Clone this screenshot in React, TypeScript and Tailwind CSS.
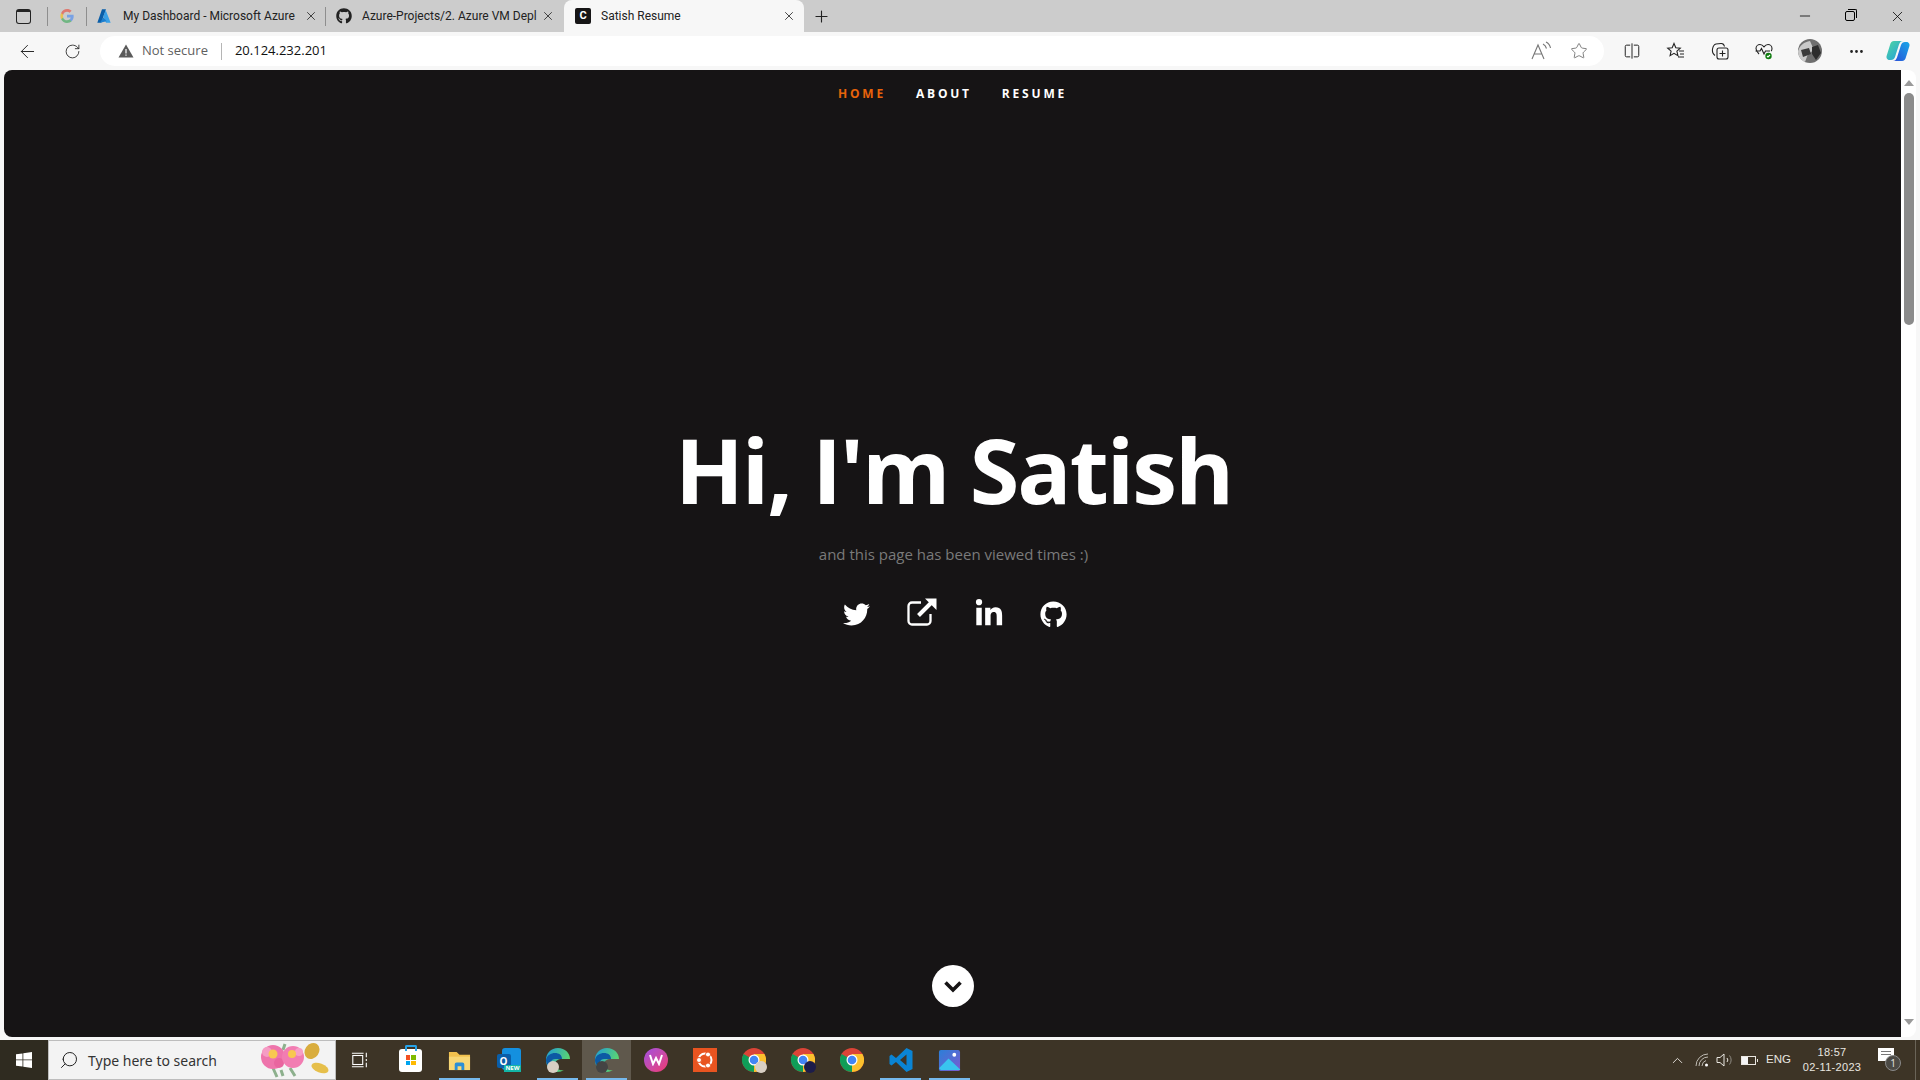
import { FaTwitter, FaLinkedinIn, FaGithub } from 'react-icons/fa'
import { ArrowLeft, RotateCw, X, Plus, Minus, Star, ChevronUp, Search, MoreHorizontal } from 'lucide-react'

function GoogleIcon() {
  return (
    <svg viewBox="0 0 24 24" className="w-4 h-4 opacity-60">
      <path d="M22 12.2c0-.7-.1-1.4-.2-2H12v3.900h5.600c-.3 1.300-1 2.400-2.100 3.100v2.600h3.400c2-1.800 3.100-4.500 3.100-7.600z" fill="#4285f4" />
      <path d="M12 22.500c2.800 0 5.200-.9 6.900-2.500l-3.400-2.600c-.9.600-2.100 1-3.500 1-2.700 0-5-1.800-5.800-4.300H3.200v2.700c1.700 3.400 5.100 5.700 8.800 5.700z" fill="#34a853" />
      <path d="M6.200 14.100c-.4-1.300-.4-2.700 0-4V7.400H3.200c-1.500 2.800-1.500 6.200 0 9.400z" fill="#fbbc05" />
      <path d="M12 5.600c1.500 0 2.900.5 3.900 1.500l3-3C17.200 2.500 14.800 1.500 12 1.500c-3.700 0-7.100 2.300-8.800 5.900l3 2.700C7 7.500 9.300 5.600 12 5.600z" fill="#ea4335" />
    </svg>
  )
}

function AzureIcon() {
  return (
    <svg viewBox="0 0 24 24" className="w-4 h-4">
      <path d="M9 2h6L8 22H2z" fill="#0a5ea8" />
      <path d="M14 2l8 20h-7L11 12l3-7z" fill="#3aa0e6" />
      <path d="M11 14l5 6-10 2z" fill="#1b7fd0" />
    </svg>
  )
}

function TabClose() {
  return <X size={14} strokeWidth={1.4} className="text-[#222]" />
}

function TabStrip() {
  return (
    <div className="h-8 bg-[#cccccc] flex items-end text-[12px] text-[#222] shrink-0 font-['Roboto',sans-serif]">
      <div className="w-[47px] h-8 flex items-center justify-center">
        <div className="w-[15px] h-[15px] rounded-[3px] border-[1.5px] border-[#222] border-t-[3px]" />
      </div>
      <div className="w-px h-[19px] bg-[#8e8e8e] mb-[6px]" />
      <div className="w-[38px] h-8 flex items-center justify-center"><GoogleIcon /></div>
      <div className="w-px h-[19px] bg-[#8e8e8e] mb-[6px]" />
      <div className="w-[238px] h-8 flex items-center pl-[9px]">
        <AzureIcon />
        <span className="ml-[11px] w-[181px] whitespace-nowrap">My Dashboard - Microsoft Azure</span>
        <TabClose />
      </div>
      <div className="w-px h-[19px] bg-[#8e8e8e] mb-[6px]" />
      <div className="w-[238px] h-8 flex items-center pl-[10px]">
        <FaGithub size={16} />
        <span className="ml-[10px] w-[179px] whitespace-nowrap">Azure-Projects/2. Azure VM Depl</span>
        <TabClose />
      </div>
      <div className="w-[240px] h-[32px] bg-[#f7f7f7] rounded-t-[8px] flex items-center pl-[11px]">
        <div className="w-4 h-4 rounded-[2px] bg-[#161516] text-white text-[11px] font-bold flex items-center justify-center">C</div>
        <span className="ml-[10px] w-[181px]">Satish Resume</span>
        <TabClose />
      </div>
      <div className="w-[34px] h-8 flex items-center justify-center">
        <Plus size={19} strokeWidth={1.4} className="text-[#222]" />
      </div>
      <div className="flex-1" />
      <div className="h-8 flex items-center">
        <div className="w-[46px] flex justify-center"><Minus size={16} strokeWidth={1.2} className="text-black" /></div>
        <div className="w-[46px] flex justify-center pr-[2px]">
          <div className="relative w-[10px] h-[10px] border border-black rounded-[2px] bg-[#cccccc]">
            <div className="absolute -top-[3px] -right-[3px] w-[9px] h-[9px] border-t border-r border-black rounded-tr-[2px]" />
          </div>
        </div>
        <div className="w-[46px] flex justify-center"><X size={17} strokeWidth={1.1} className="text-black" /></div>
      </div>
    </div>
  )
}

function ToolbarIcons() {
  return (
    <div className="flex items-center text-[#222] ml-[6px]">
      <div className="w-[44px] flex justify-center">
        <svg viewBox="0 0 20 20" className="w-[18px] h-[18px]" fill="none" stroke="#222" strokeWidth="1.1">
          <path d="M8 3.500H4a1.500 1.500 0 0 0-1.500 1.500v10A1.500 1.500 0 0 0 4 16.500h4M12 3.500h4A1.500 1.500 0 0 1 17.500 5v10a1.500 1.500 0 0 1-1.500 1.500h-4M10 1.500v17" />
        </svg>
      </div>
      <div className="w-[44px] flex justify-center">
        <svg viewBox="0 0 20 20" className="w-5 h-5" fill="none" stroke="#222" strokeWidth="1.1">
          <path d="M8 2.500l1.800 4.300 4.500.4-3.400 3 1 4.500L8 12.300l-3.900 2.400 1-4.500-3.400-3 4.500-.4zM13 10h5M14 13h4M12 16h6" />
        </svg>
      </div>
      <div className="w-[44px] flex justify-center">
        <svg viewBox="0 0 20 20" className="w-5 h-5" fill="none" stroke="#222" strokeWidth="1.1">
          <path d="M5 14.500C3 13 2 11 2.500 8 3 5.500 3.500 3.500 6 3l5-.5c2-.2 3 .8 3.500 3" />
          <rect x="7" y="7" width="11" height="11" rx="2" />
          <path d="M12.500 9.500v6M9.500 12.500h6" />
        </svg>
      </div>
      <div className="w-[44px] flex justify-center">
        <svg viewBox="0 0 20 20" className="w-5 h-5" fill="none" stroke="#222" strokeWidth="1.1">
          <path d="M5 13C3 11 2 9.500 2 7.500 2 5 4 3.500 6 3.500c1.700 0 3 1 4 2.300 1-1.300 2.300-2.300 4-2.300 2 0 4 1.500 4 4 0 1-.3 1.800-.8 2.600" />
          <path d="M1.500 10H6l1.500-2.500L10 13l1.500-3H16" />
          <circle cx="14.500" cy="15" r="3.200" fill="#107c10" stroke="none" />
          <path d="M13 15l1 1 2-2" stroke="#fff" />
        </svg>
      </div>
      <div className="w-[48px] flex justify-center">
        <svg viewBox="0 0 24 24" className="w-6 h-6">
          <circle cx="12" cy="12" r="12" fill="#6f6f6f" />
          <path d="M0 12C2 6 6 3 12 2l4 9-6 4-3 8C3 21 0 17 0 12z" fill="#c9c9c9" />
          <path d="M3 11l8-2 2 6-8 3z" fill="#3a3a3a" />
          <path d="M14 8l6-2 3 8-5 7-4-6z" fill="#2d2d2d" />
        </svg>
      </div>
      <div className="w-[44px] flex justify-center"><MoreHorizontal size={17} strokeWidth={2} className="text-[#222]" /></div>
      <div className="w-[40px] flex justify-center">
        <svg viewBox="0 0 24 24" className="w-6 h-6">
          <defs>
            <linearGradient id="cp1" x1="0" y1="0" x2="1" y2="1">
              <stop offset="0" stopColor="#4fd8a0" />
              <stop offset="1" stopColor="#1f9ae0" />
            </linearGradient>
            <linearGradient id="cp2" x1="0" y1="1" x2="1" y2="0">
              <stop offset="0" stopColor="#2a4fd8" />
              <stop offset="1" stopColor="#18a8e8" />
            </linearGradient>
          </defs>
          <path d="M8 2h9c-2 0-3 1-4 3.500L9 18c-.7 2-2 3-4 3H3.500C1.500 21 0 19 .6 17L4 6c.6-2.500 2-4 4-4z" fill="url(#cp1)" />
          <path d="M16 22H7c2 0 3-1 4-3.500L15 6c.7-2 2-3 4-3h1.500c2 0 3.500 2 2.900 4L20 18c-.6 2.500-2 4-4 4z" fill="url(#cp2)" />
        </svg>
      </div>
    </div>
  )
}

function Toolbar() {
  return (
    <div className="h-[38px] bg-[#f7f7f7] flex items-center shrink-0">
      <div className="w-[100px] flex items-center">
        <div className="w-[54px] flex justify-center"><ArrowLeft size={21} strokeWidth={1.1} className="text-[#222]" /></div>
        <div className="w-[36px] flex justify-center"><RotateCw size={17} strokeWidth={1.2} className="text-[#222]" /></div>
      </div>
      <div className="w-[1504px] h-[30px] bg-white rounded-full flex items-center text-[13px] pl-[18px] pr-[16px]">
        <svg viewBox="0 0 16 16" className="w-4 h-4"><path d="M8 1.500L15.500 14.500H.5z" fill="#5a5a5a" /><path d="M7.400 6h1.200v4.500H7.400zM7.400 11.500h1.200v1.200H7.400z" fill="#fff" /></svg>
        <span className="ml-[8px] text-[#5f5f5f]">Not secure</span>
        <div className="w-px h-[17px] bg-[#b5b5b5] mx-[13px]" />
        <span className="text-[#111] font-[500] text-[13px]">20.124.232.201</span>
        <div className="flex-1" />
        <svg viewBox="0 0 22 20" className="w-[22px] h-5" fill="none" stroke="#777" strokeWidth="1.1">
          <path d="M2 18L8 4l6 14M4.500 13h7" />
          <path d="M13 3c2 1 3 2.500 3.500 4.500M16 1c2.500 1.200 4 3.500 4.500 6" />
        </svg>
        <Star size={18} strokeWidth={1.1} className="text-[#666] ml-[18px]" />
      </div>
      <ToolbarIcons />
    </div>
  )
}

function Scrollbar() {
  return (
    <div className="w-[15px] mr-[4px] bg-white rounded-r-[8px] flex flex-col items-center shrink-0 pt-[10px] pb-[12px]">
      <div className="w-0 h-0 border-x-[5px] border-x-transparent border-b-[6px] border-b-[#9a9a9a]" />
      <div className="w-[10px] h-[232px] bg-[#8b8b8b] rounded-full mt-[7px]" />
      <div className="flex-1" />
      <div className="w-0 h-0 border-x-[5px] border-x-transparent border-t-[6px] border-t-[#9a9a9a]" />
    </div>
  )
}

function ExternalLink() {
  return (
    <svg viewBox="0 0 32 32" className="w-8 h-8 -translate-y-[2px]" fill="none" stroke="#fff">
      <path d="M15 6.500H6a3.500 3.500 0 0 0-3.500 3.500v15A3.500 3.500 0 0 0 6 28.500h15a3.500 3.500 0 0 0 3.500-3.500v-7" strokeWidth="2.300" />
      <path d="M12.500 19.500L26 6" strokeWidth="4" />
      <path d="M19 2.500h11.500V14z" fill="#fff" stroke="none" />
    </svg>
  )
}

function Page() {
  return (
    <main className="flex-1 bg-[#161415] rounded-l-[8px] flex flex-col items-center font-['Open_Sans',sans-serif]">
      <nav className="h-[47px] flex items-center justify-center gap-[30px] text-[12px] font-bold tracking-[2.800px] text-white shrink-0">
        <a className="text-[#e8630a]">HOME</a>
        <a>ABOUT</a>
        <a>RESUME</a>
      </nav>
      <div className="flex flex-col items-center mt-[303px] ml-[2px]">
        <h1 className="text-[90px] leading-[99px] font-bold text-white tracking-[-2px]">Hi, I'm Satish</h1>
        <h3 className="text-[15px] leading-[28px] text-[#7a7a7a] mt-[21px]">and this page has been viewed times :)</h3>
        <div className="flex items-center gap-[36px] mt-[29px] ml-[3px] h-[34px] text-white">
          <FaTwitter size={27} />
          <ExternalLink />
          <FaLinkedinIn size={30} />
          <FaGithub size={27} />
        </div>
      </div>
      <div className="flex-1" />
      <div className="w-[42px] h-[42px] rounded-full bg-white flex items-center justify-center mb-[30px]">
        <svg viewBox="0 0 18 12" className="w-[18px] h-3 mt-[1px]" fill="none" stroke="#161415" strokeWidth="3.600">
          <path d="M1.500 1.500L9 9l7.500-7.500" />
        </svg>
      </div>
    </main>
  )
}

function Flowers() {
  return (
    <svg viewBox="0 0 72 36" className="w-[72px] h-[36px]">
      <path d="M14 26l4 9M31 26l5 8M24 8l2-6M22 28l2 6" stroke="#8db08d" strokeWidth="3" />
      <circle cx="14" cy="15" r="12" fill="#ee74ab" />
      <circle cx="8" cy="10" r="5" fill="#f59cc4" />
      <circle cx="20" cy="21" r="5" fill="#e9659f" />
      <circle cx="14" cy="12" r="4.500" fill="#f8c850" />
      <circle cx="34" cy="15" r="11" fill="#f27db2" />
      <circle cx="40" cy="10" r="4" fill="#f79fc6" />
      <circle cx="33" cy="12" r="4" fill="#f8c850" />
      <ellipse cx="53" cy="9" rx="7" ry="8.500" fill="#d9ad3e" transform="rotate(35 53 9)" />
      <ellipse cx="61" cy="26" rx="9" ry="4.500" fill="#e6bf4a" transform="rotate(20 61 26)" />
    </svg>
  )
}

function ChromeIcon({ badge }: { badge?: string }) {
  return (
    <div className="relative w-6 h-6">
      <svg viewBox="0 0 24 24" className="w-6 h-6">
        <circle cx="12" cy="12" r="12" fill="#db4437" />
        <path d="M12 24A12 12 0 0 1 1.600 6L12 12z" fill="#0f9d58" />
        <path d="M12 24A12 12 0 0 0 22.400 6H12z" fill="#fbc02d" />
        <circle cx="12" cy="12" r="5.500" fill="#fff" />
        <circle cx="12" cy="12" r="4.300" fill="#4285f4" />
      </svg>
      {badge && <div className={`absolute -right-[1px] -bottom-[1px] w-3 h-3 rounded-full ${badge}`} />}
    </div>
  )
}

function EdgeIcon({ badge }: { badge: string }) {
  return (
    <div className="relative w-6 h-6">
      <svg viewBox="0 0 24 24" className="w-6 h-6">
        <defs>
          <linearGradient id="edge1" x1="0" y1="0" x2="1" y2="0.500">
            <stop offset="0" stopColor="#1e9bd8" />
            <stop offset="1" stopColor="#5fd96a" />
          </linearGradient>
        </defs>
        <path d="M12 0C5 0 0 5 0 12c0 7 5 12 11 12 3 0 5-1 7-2-4 1-9-1-9-6 0-3 3-5 7-5h8C24 5 19 0 12 0z" fill="url(#edge1)" />
        <path d="M0 12c1-5 5-7 9-7 4 0 7 2 7 6H9c-3 0-6 3-3 9-3-1-6-4-6-8z" fill="#0c59a4" />
      </svg>
      <div className={`absolute left-[1px] -bottom-[1px] w-3 h-3 rounded-full ${badge}`} />
    </div>
  )
}

function TaskIcon({ active, open, children }: { active?: boolean; open?: boolean; children: React.ReactNode }) {
  return (
    <div className={`relative w-[49px] h-10 flex items-center justify-center ${active ? 'bg-[#5f584c]' : ''}`}>
      {children}
      {open && <div className="absolute bottom-0 inset-x-[4px] h-[2px] bg-[#76b9ed]" />}
    </div>
  )
}

function Taskbar() {
  return (
    <footer className="h-10 bg-[#3d3426] flex items-center text-white shrink-0 font-['Open_Sans',sans-serif]">
      <div className="w-12 h-10 bg-[#2f2b20] flex items-center justify-center">
        <svg viewBox="0 0 16 16" className="w-4 h-4" fill="#fff">
          <path d="M0 2.300L6.500 1.400V7.500H0zM7.300 1.300L16 0v7.500H7.300zM0 8.300h6.500v6.300L0 13.700zM7.300 8.300H16V16l-8.700-1.200z" />
        </svg>
      </div>
      <div className="w-[288px] h-10 bg-[#f3f3f3] border border-[#bdbdbd] flex items-center pl-[10px] pr-[4px]">
        <Search size={20} strokeWidth={1.2} className="text-[#222] -scale-x-100" />
        <span className="ml-[9px] text-[#333] text-[14px] font-['Noto_Sans',sans-serif]">Type here to search</span>
        <div className="flex-1" />
        <Flowers />
      </div>
      <div className="flex items-center ml-[1px]">
        <TaskIcon>
          <svg viewBox="0 0 20 20" className="w-[18px] h-[18px] -ml-[4px]" fill="none" stroke="#fff" strokeWidth="1.200">
            <rect x="2" y="5" width="11" height="10" />
            <path d="M1 2.500h13M1 17.500h13M17 2v5M17 9v2M17 13v5" />
          </svg>
        </TaskIcon>
        <TaskIcon>
          <div className="relative w-[23px] h-[23px] bg-white rounded-[3px] flex items-center justify-center">
            <div className="absolute -top-[4px] w-[12px] h-[6px] border-2 border-b-0 border-[#27a3e8] rounded-t-[2px]" />
            <div className="grid grid-cols-2 gap-px w-[10px] h-[10px]">
              <div className="bg-[#f25022]" />
              <div className="bg-[#7fba00]" />
              <div className="bg-[#00a4ef]" />
              <div className="bg-[#ffb900]" />
            </div>
          </div>
        </TaskIcon>
        <TaskIcon open>
          <svg viewBox="0 0 24 24" className="w-[23px] h-[23px]">
            <path d="M1 3h8l3 3h11v16H1z" fill="#f2c14e" />
            <path d="M1 8h22v14H1z" fill="#f8d775" />
            <path d="M7 22v-6a2 2 0 0 1 2-2h6a2 2 0 0 1 2 2v6h-3v-4h-4v4z" fill="#2b8fd6" />
          </svg>
        </TaskIcon>
        <TaskIcon>
          <div className="relative w-6 h-6">
            <div className="absolute right-0 top-0 w-[19px] h-[22px] rounded-[3px] bg-[#1490df]" />
            <div className="absolute left-0 top-[6px] w-[14px] h-[14px] rounded-[2px] bg-[#0a5ea8] text-white text-[10px] font-bold flex items-center justify-center">O</div>
            <div className="absolute right-0 bottom-0 h-[7px] px-[1px] bg-[#13b5a6] text-[6px] leading-[7px] font-bold">NEW</div>
          </div>
        </TaskIcon>
        <TaskIcon open><EdgeIcon badge="bg-[#d8cfc4]" /></TaskIcon>
        <TaskIcon active open><EdgeIcon badge="bg-[#444444]" /></TaskIcon>
        <TaskIcon>
          <div className="w-6 h-6 rounded-full bg-gradient-to-br from-[#a24ae0] to-[#f0326e] flex items-center justify-center">
            <svg viewBox="0 0 14 12" className="w-[14px] h-3" fill="none" stroke="#fff" strokeWidth="2">
              <path d="M1 1l3 9 3-6 3 6 3-9" />
            </svg>
          </div>
        </TaskIcon>
        <TaskIcon>
          <svg viewBox="0 0 24 24" className="w-6 h-6">
            <rect width="24" height="24" fill="#e95420" />
            <circle cx="12" cy="12" r="6.500" fill="none" stroke="#fff" strokeWidth="2" />
            <circle cx="6" cy="12" r="2.500" fill="#fff" stroke="#e95420" />
            <circle cx="15" cy="6.500" r="2.500" fill="#fff" stroke="#e95420" />
            <circle cx="15" cy="17.500" r="2.500" fill="#fff" stroke="#e95420" />
          </svg>
        </TaskIcon>
        <TaskIcon><ChromeIcon badge="bg-[#d8cfc4]" /></TaskIcon>
        <TaskIcon><ChromeIcon badge="bg-[#1c1c4a]" /></TaskIcon>
        <TaskIcon><ChromeIcon /></TaskIcon>
        <TaskIcon open>
          <svg viewBox="0 0 24 24" className="w-6 h-6">
            <path d="M17.500 0L23.500 3v18l-6 3L7 14l-4.500 3.500L.5 16V8l2-1.500L7 10zM17.500 6.500L11 12l6.500 5.500z" fill="#0a84d4" />
          </svg>
        </TaskIcon>
        <TaskIcon open>
          <svg viewBox="0 0 24 24" className="w-[23px] h-[23px]">
            <defs>
              <linearGradient id="ph1" x1="0" y1="0" x2="1" y2="1">
                <stop offset="0" stopColor="#2b7fd8" />
                <stop offset="1" stopColor="#7a5bd0" />
              </linearGradient>
            </defs>
            <rect width="22" height="22" x="1" y="1" rx="2" fill="url(#ph1)" />
            <path d="M1 20l10-10 12 11v1H3z" fill="#39c4ee" />
            <circle cx="17" cy="6" r="2" fill="#fff" />
          </svg>
        </TaskIcon>
      </div>
      <div className="flex-1" />
      <div className="flex items-center text-[#e9e6e0]">
        <ChevronUp size={17} strokeWidth={1.3} />
        <svg viewBox="0 0 16 16" className="w-4 h-4 ml-[8px]" fill="none" stroke="#bfbbb3" strokeWidth="1">
          <path d="M2 14a12 12 0 0 1 12-12M5 14a9 9 0 0 1 9-9M8 14a6 6 0 0 1 4-5.500" />
          <circle cx="12.500" cy="13" r="1.500" fill="#fff" stroke="none" />
        </svg>
        <svg viewBox="0 0 18 16" className="w-[18px] h-4 ml-[6px]" fill="none" stroke="#e9e6e0" strokeWidth="1">
          <path d="M1 5.500h3L8 2v12l-4-3.500H1zM11 6a3 3 0 0 1 0 4" />
          <path d="M13.500 3.500a7 7 0 0 1 0 9" stroke="#8f8b83" />
        </svg>
        <div className="w-[15px] h-[9px] border border-[#e9e6e0] ml-[7px] mr-[1px]">
          <div className="w-[6px] h-full bg-[#f5f5f5]" />
        </div>
        <div className="w-px h-[3px] bg-[#e9e6e0]" />
        <span className="ml-[8px] text-[11.500px] font-['Liberation_Sans',sans-serif]">ENG</span>
        <div className="w-[78px] ml-[2px] flex flex-col items-center text-[11px] leading-[15px] tracking-[0.3px] font-['Liberation_Sans',sans-serif]">
          <span>18:57</span>
          <span>02-11-2023</span>
        </div>
        <div className="relative w-[24px] h-[24px] ml-[7px] mr-[13px]">
          <div className="w-4 h-[13px] bg-white flex flex-col gap-[2px] pt-[3px] px-[3px]">
            <div className="h-px bg-[#777]" />
            <div className="h-px bg-[#777]" />
          </div>
          <div className="absolute left-[7px] top-[7px] w-4 h-4 rounded-full bg-[#4c4a45] border border-[#8a8a8a] text-[10px] leading-[14px] text-center">1</div>
        </div>
        <div className="w-px h-10 bg-[#6a6458] mr-[4px]" />
      </div>
    </footer>
  )
}

export default function App() {
  return (
    <div className="w-[1920px] h-[1080px] flex flex-col overflow-hidden bg-[#f7f7f7] font-['Open_Sans',sans-serif]">
      <TabStrip />
      <Toolbar />
      <div className="flex-1 flex pl-[4px] pb-[3px] min-h-0">
        <Page />
        <Scrollbar />
      </div>
      <Taskbar />
    </div>
  )
}
